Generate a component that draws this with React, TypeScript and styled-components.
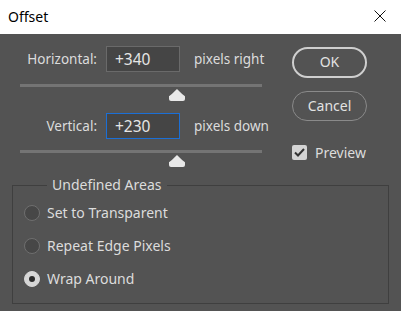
import React, { useState } from 'react'
import styled, { createGlobalStyle } from 'styled-components'

const GlobalStyle = createGlobalStyle`
  html, body {
    margin: 0;
    padding: 0;
    background: #535353;
  }
  * {
    box-sizing: border-box;
  }
`

const FONT = `'Noto Sans', 'Open Sans', 'Liberation Sans', sans-serif`

const Window = styled.div`
  width: 401px;
  height: 311px;
  display: flex;
  flex-direction: column;
  font-family: ${FONT};
  color: #dcdcdc;
  overflow: hidden;
`

const TitleBar = styled.div`
  height: 34px;
  flex: none;
  background: #ffffff;
  color: #000000;
  display: flex;
  align-items: center;
  justify-content: space-between;
  padding: 0 15px 2px 8px;
  font-size: 14px;
`

const CloseButton = styled.button`
  border: none;
  background: none;
  padding: 0;
  width: 12px;
  height: 12px;
  display: flex;
  cursor: pointer;
`

const Body = styled.div`
  flex: 1;
  background: #535353;
  padding: 12px 12px 10px 12px;
  display: flex;
  flex-direction: column;
`

const Top = styled.div`
  display: flex;
  align-items: flex-start;
`

const Controls = styled.div`
  width: 262px;
  padding-left: 8px;
  display: flex;
  flex-direction: column;
`

const FieldRow = styled.div`
  display: flex;
  align-items: center;
  height: 26px;
  font-size: 13.5px;
`

const Label = styled.label`
  width: 86px;
  flex: none;
  text-align: right;
  padding-right: 9px;
  white-space: nowrap;
`

const NumberInput = styled.input<{ $focused?: boolean }>`
  width: 74px;
  height: 26px;
  flex: none;
  background: #454545;
  border: 1px solid ${p => (p.$focused ? '#1b6fd6' : '#6a6a6a')};
  color: #e6e6e6;
  font-family: ${FONT};
  font-size: 15.5px;
  padding: 0 0 1px 8px;
  outline: none;
`

const Unit = styled.span`
  margin-left: 14px;
  white-space: nowrap;
`

const Slider = styled.div<{ $top: number }>`
  position: relative;
  margin-top: ${p => p.$top}px;
  height: 17px;
  width: 242px;
`

const Track = styled.div`
  height: 3px;
  background: #747474;
`

const Thumb = styled.div`
  position: absolute;
  top: 5px;
  width: 16px;
  height: 12px;
  margin-left: -8px;
  background: #e8e8e8;
  clip-path: polygon(50% 0, 82% 42%, 100% 60%, 100% 100%, 0 100%, 0 60%, 18% 42%);
  border-radius: 0 0 2px 2px;
`

const Side = styled.div`
  margin-left: 18px;
  margin-top: 1px;
  width: 75px;
  flex: none;
  display: flex;
  flex-direction: column;
`

const PillButton = styled.button<{ $primary?: boolean }>`
  height: ${p => (p.$primary ? 31 : 30)}px;
  margin-bottom: ${p => (p.$primary ? 13 : 22)}px;
  border-radius: 16px;
  background: transparent;
  border: ${p => (p.$primary ? '2px solid #cfcfcf' : '1px solid #8a8a8a')};
  color: #e2e2e2;
  font-family: ${FONT};
  font-size: 14px;
  padding: 0 0 2px;
  cursor: pointer;
`

const CheckRow = styled.label`
  display: flex;
  align-items: center;
  font-size: 14px;
  gap: 8px;
  cursor: pointer;
`

const CheckBox = styled.span`
  width: 15px;
  height: 15px;
  border-radius: 2px;
  background: #d4d4d4;
  display: flex;
  align-items: center;
  justify-content: center;
`

const Group = styled.fieldset`
  margin: 9px 0 0 0;
  height: 128px;
  border: 1px solid #3f3f3f;
  padding: 2px 0 0 11px;
  display: flex;
  flex-direction: column;
`

const Legend = styled.legend`
  font-size: 14px;
  padding: 0 5px;
  margin-left: 23px;
  line-height: 18px;
`

const RadioRow = styled.label`
  display: flex;
  align-items: center;
  height: 33px;
  gap: 7px;
  font-size: 14px;
  cursor: pointer;
`

const RadioDot = styled.span<{ $on: boolean }>`
  width: 16px;
  height: 16px;
  border-radius: 50%;
  border: 1px solid ${p => (p.$on ? '#d6d6d6' : '#6f6f6f')};
  background: ${p => (p.$on ? '#d6d6d6' : '#474747')};
  display: flex;
  align-items: center;
  justify-content: center;
  &::after {
    content: '';
    width: 6px;
    height: 6px;
    border-radius: 50%;
    background: ${p => (p.$on ? '#2a2a2a' : 'transparent')};
  }
`

const areas = ['Set to Transparent', 'Repeat Edge Pixels', 'Wrap Around']

const App = () => {
  const [area, setArea] = useState(2)
  const [preview, setPreview] = useState(true)
  return (
    <Window>
      <GlobalStyle />
      <TitleBar>
        <span>Offset</span>
        <CloseButton aria-label="Close">
          <svg width="12" height="12" viewBox="0 0 12 12">
            <path d="M0.5 0.5 L11.5 11.5 M11.5 0.5 L0.5 11.5" stroke="#111" strokeWidth="1" />
          </svg>
        </CloseButton>
      </TitleBar>
      <Body>
        <Top>
          <Controls>
            <FieldRow>
              <Label>Horizontal:</Label>
              <NumberInput defaultValue="+340" />
              <Unit>pixels right</Unit>
            </FieldRow>
            <Slider $top={12}>
              <Track />
              <Thumb style={{ left: `${(177 - 20) / 242 * 100}%` }} />
            </Slider>
            <FieldRow style={{ marginTop: 12 }}>
              <Label>Vertical:</Label>
              <NumberInput $focused defaultValue="+230" />
              <Unit>pixels down</Unit>
            </FieldRow>
            <Slider $top={11}>
              <Track />
              <Thumb style={{ left: `${(177 - 20) / 242 * 100}%` }} />
            </Slider>
          </Controls>
          <Side>
            <PillButton $primary>OK</PillButton>
            <PillButton>Cancel</PillButton>
            <CheckRow onClick={() => setPreview(!preview)}>
              <CheckBox>
                {preview && (
                  <svg width="11" height="9" viewBox="0 0 11 9">
                    <path d="M1 4.5 L4 7.5 L10 1" fill="none" stroke="#333" strokeWidth="2" />
                  </svg>
                )}
              </CheckBox>
              Preview
            </CheckRow>
          </Side>
        </Top>
        <Group>
          <Legend>Undefined Areas</Legend>
          {areas.map((a, i) => (
            <RadioRow key={a} onClick={() => setArea(i)}>
              <RadioDot $on={area === i} />
              {a}
            </RadioRow>
          ))}
        </Group>
      </Body>
    </Window>
  )
}

export default App
